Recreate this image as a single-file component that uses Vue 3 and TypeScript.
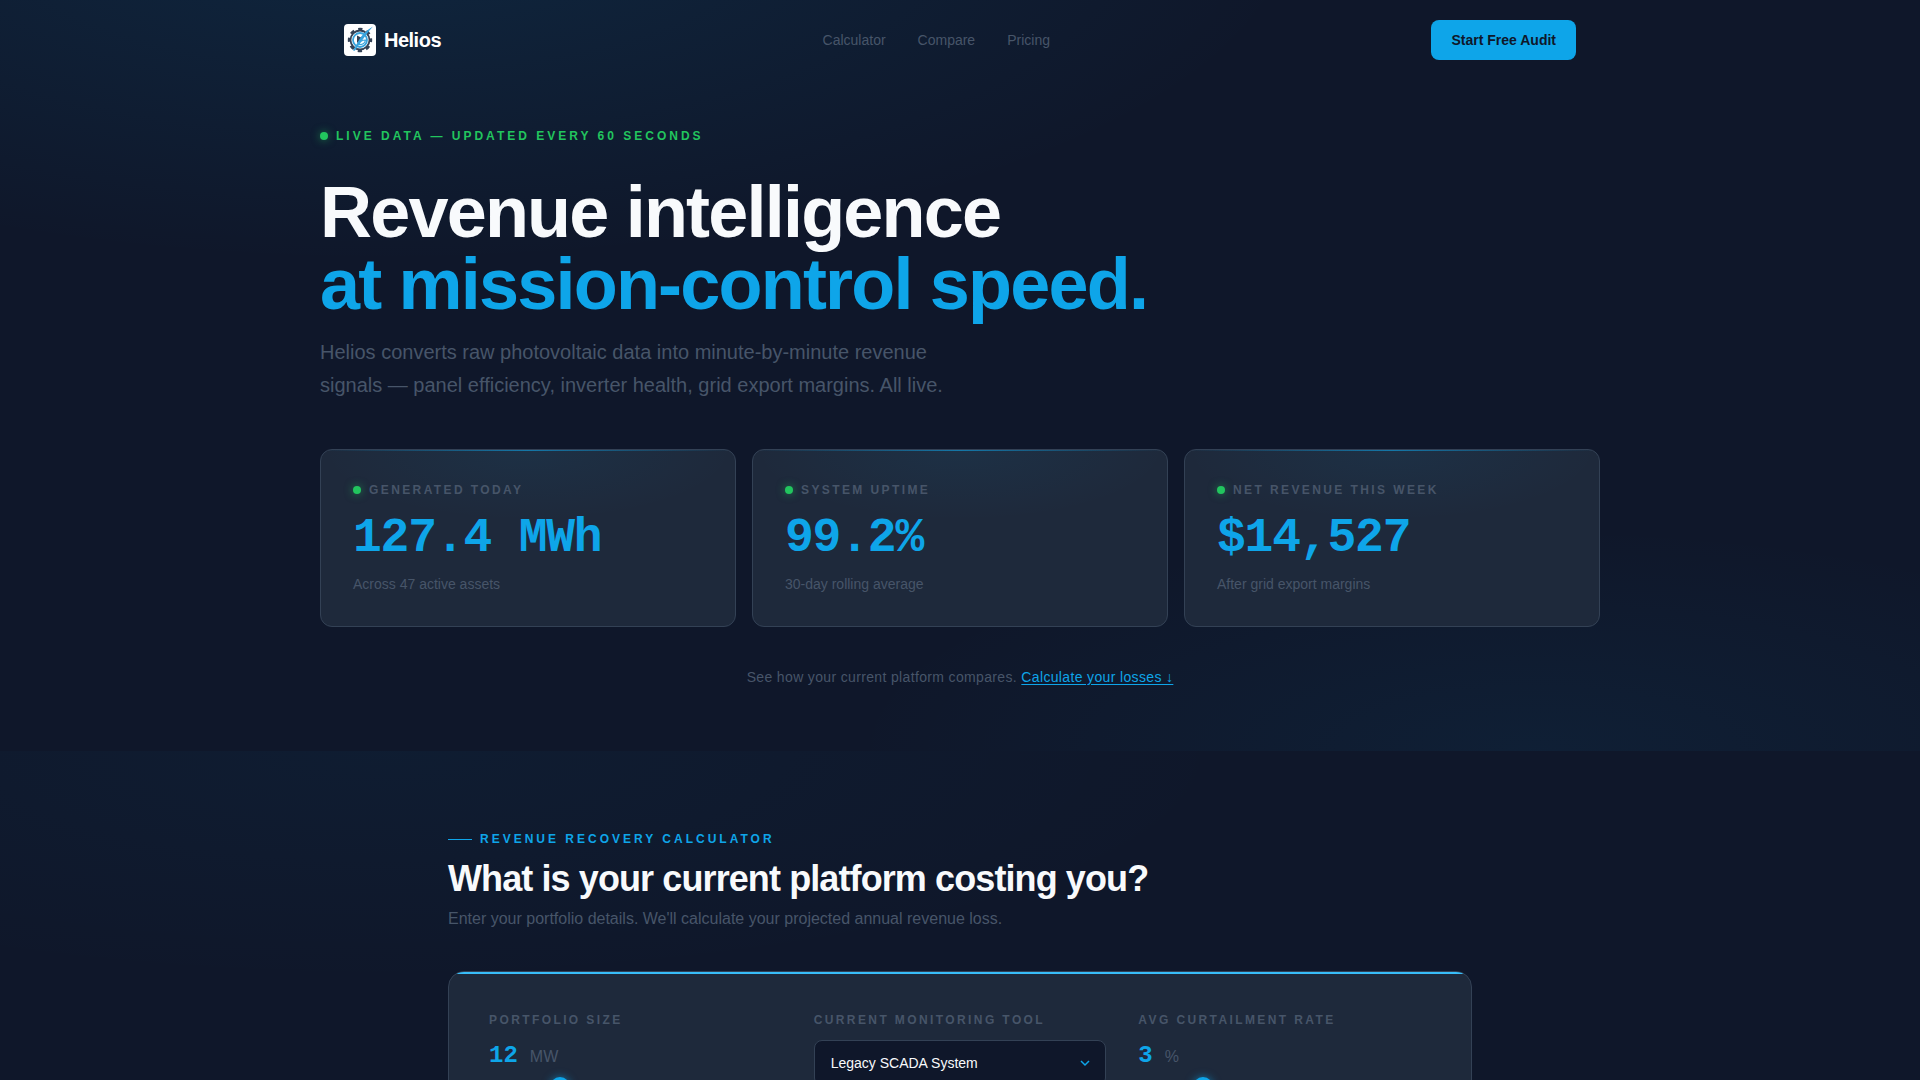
<script setup lang="ts">
import { ref } from 'vue'

interface Metric {
  label: string
  value: string
  note: string
}

const links: string[] = ['Calculator', 'Compare', 'Pricing']

const metrics: Metric[] = [
  { label: 'Generated today', value: '127.4 MWh', note: 'Across 47 active assets' },
  { label: 'System uptime', value: '99.2%', note: '30-day rolling average' },
  { label: 'Net revenue this week', value: '$14,527', note: 'After grid export margins' },
]

const tools: string[] = ['Legacy SCADA System']

const size = ref<number>(12)
const tool = ref<string>(tools[0])
const rate = ref<number>(3)
</script>

<template>
  <div class="page">
    <div class="hero">
      <header class="nav">
        <a class="brand" href="#">
          <svg class="logo" viewBox="0 0 32 32" aria-hidden="true">
            <rect width="32" height="32" rx="4" fill="#fff" />
            <circle cx="16" cy="16" r="9.500" fill="none" stroke="#334155" stroke-width="1.8" />
            <circle cx="16" cy="16" r="10.800" fill="none" stroke="#334155" stroke-width="2.800" stroke-dasharray="4.24 4.24" stroke-dashoffset="2.12" />
            <circle cx="16" cy="16" r="7" fill="#fff" stroke="#38a3dc" stroke-width="1.8" />
            <path d="M13 11.500l6 3-6 4.500z" fill="#334155" />
            <path d="M29 2.500C23 6 18 10.500 15 16L9 26.500l1.800.3 4.200-6C19 15 24 8 29 2.500z" fill="#38a3dc" />
            <path d="M15 20.500c1-3 3.500-4.500 6.500-4.500-.5 3-3 4.800-6.500 4.500z" fill="#fff" stroke="#38a3dc" stroke-width="1.2" />
          </svg>
          <span>Helios</span>
        </a>
        <nav class="links">
          <a v-for="link in links" :key="link" href="#">{{ link }}</a>
        </nav>
        <button class="audit" type="button">Start Free Audit</button>
      </header>

      <main class="intro">
        <p class="live"><span class="dot"></span>Live data — updated every 60 seconds</p>
        <h1>Revenue intelligence<br /><span>at mission-control speed.</span></h1>
        <p class="lead">
          Helios converts raw photovoltaic data into minute-by-minute revenue signals — panel
          efficiency, inverter health, grid export margins. All live.
        </p>
        <div class="metrics">
          <article v-for="m in metrics" :key="m.label" class="metric">
            <h2 class="label"><span class="dot"></span>{{ m.label }}</h2>
            <p class="value">{{ m.value }}</p>
            <p class="note">{{ m.note }}</p>
          </article>
        </div>
        <p class="compare">
          See how your current platform compares. <a href="#calculator">Calculate your losses ↓</a>
        </p>
      </main>
    </div>

    <section id="calculator" class="calculator">
      <div class="inner">
        <p class="eyebrow">Revenue recovery calculator</p>
        <h2 class="title">What is your current platform costing you?</h2>
        <p class="hint">Enter your portfolio details. We'll calculate your projected annual revenue loss.</p>
        <form class="panel">
          <div class="field">
            <label class="label" for="size">Portfolio size</label>
            <p class="reading"><output for="size">{{ size }}</output><span>MW</span></p>
            <input id="size" v-model.number="size" type="range" min="1" max="50" />
          </div>
          <div class="field">
            <label class="label" for="tool">Current monitoring tool</label>
            <div class="picker">
              <select id="tool" v-model="tool">
                <option v-for="t in tools" :key="t">{{ t }}</option>
              </select>
              <svg viewBox="0 0 12 12" aria-hidden="true">
                <path d="M2 4l4 4 4-4" fill="none" stroke="#0ea5e9" stroke-width="1.5" />
              </svg>
            </div>
          </div>
          <div class="field">
            <label class="label" for="rate">Avg curtailment rate</label>
            <p class="reading"><output for="rate">{{ rate }}</output><span>%</span></p>
            <input id="rate" v-model.number="rate" type="range" min="0" max="15" />
          </div>
        </form>
      </div>
    </section>
  </div>
</template>

<style>
body {
  margin: 0;
  background: #0f172a;
}
</style>

<style scoped>
.page {
  height: 100vh;
  overflow-x: hidden;
  overflow-y: auto;
  scrollbar-width: none;
  background: #0f172a;
  color: #475569;
  font-family: "Liberation Sans", Arial, sans-serif;
  font-size: 14px;
  line-height: 20px;
}

h1,
h2,
p {
  margin: 0;
}

a {
  color: inherit;
  text-decoration: none;
}

.hero {
  background:
    radial-gradient(ellipse 36% 30% at 80% 100%, rgba(14, 165, 233, 0.06), transparent 100%),
    radial-gradient(ellipse 48% 45% at 20% -10%, rgba(14, 165, 233, 0.11), transparent 100%);
}

.nav {
  box-sizing: border-box;
  display: flex;
  align-items: center;
  justify-content: space-between;
  max-width: 1280px;
  height: 80px;
  margin: 0 auto;
  padding: 0 24px;
}

.brand {
  display: flex;
  align-items: center;
  gap: 8px;
  color: #fff;
  font-size: 20px;
  font-weight: 700;
  letter-spacing: -0.025em;
}

.logo {
  width: 32px;
  height: 32px;
}

.links {
  display: flex;
  gap: 32px;
}

.audit {
  height: 40px;
  padding: 0 20px;
  border: 0;
  border-radius: 8px;
  background: #0ea5e9;
  color: #0f172a;
  font: 700 14px "Liberation Sans", Arial, sans-serif;
  cursor: pointer;
}

.intro {
  max-width: 1280px;
  margin: 0 auto;
  padding: 48px 0 64px;
}

.dot {
  width: 8px;
  height: 8px;
  border-radius: 50%;
  background: #22c55e;
  box-shadow: 0 0 8px rgba(34, 197, 94, 0.6);
}

.live,
.label,
.eyebrow {
  display: flex;
  align-items: center;
  gap: 8px;
  font-size: 12px;
  font-weight: 700;
  line-height: 16px;
  letter-spacing: 0.2em;
  text-transform: uppercase;
}

.live,
.eyebrow {
  letter-spacing: 0.25em;
}

.live {
  margin-bottom: 32px;
  color: #22c55e;
}

h1 {
  color: #f8fafc;
  font-size: 72px;
  line-height: 72px;
  letter-spacing: -0.025em;
}

h1 span {
  color: #0ea5e9;
}

.lead {
  max-width: 640px;
  margin: 16px 0 47px;
  font-size: 20px;
  line-height: 33px;
}

.metrics {
  display: grid;
  grid-template-columns: repeat(3, 1fr);
  gap: 16px;
}

.metric {
  position: relative;
  overflow: hidden;
  padding: 32px;
  border: 1px solid #334155;
  border-radius: 12px;
  background:
    radial-gradient(ellipse 50% 40% at 50% 0%, rgba(14, 165, 233, 0.06), transparent 100%),
    #1e293b;
}

.metric::before {
  content: "";
  position: absolute;
  top: 0;
  right: 0;
  left: 0;
  height: 1px;
  background: linear-gradient(90deg, transparent, #0ea5e9, transparent);
  opacity: 0.6;
}

.value {
  margin: 16px 0 12px;
  color: #0ea5e9;
  font-family: "Liberation Mono", "Courier New", monospace;
  font-size: 48px;
  font-weight: 700;
  line-height: 48px;
  letter-spacing: -0.025em;
}

.compare {
  margin-top: 40px;
  letter-spacing: 0.025em;
  text-align: center;
}

.compare a {
  color: #0ea5e9;
  text-decoration: underline;
  text-underline-offset: 2px;
}

.calculator {
  background: radial-gradient(ellipse 45% 50% at 20% 0%, rgba(14, 165, 233, 0.04), transparent 100%);
}

.inner {
  max-width: 1024px;
  margin: 0 auto;
  padding: 80px 0;
}

.eyebrow {
  color: #0ea5e9;
}

.eyebrow::before {
  content: "";
  width: 24px;
  height: 1px;
  background: #0ea5e9;
}

.title {
  margin: 12px 0 8px;
  color: #f8fafc;
  font-size: 36px;
  line-height: 40px;
  letter-spacing: -0.025em;
}

.hint {
  font-size: 16px;
  line-height: 24px;
}

.panel {
  position: relative;
  overflow: hidden;
  display: grid;
  grid-template-columns: repeat(3, 1fr);
  gap: 32px;
  margin-top: 40px;
  padding: 40px;
  border: 1px solid #334155;
  border-radius: 16px;
  background: #1e293b;
}

.panel::before {
  content: "";
  position: absolute;
  top: 0;
  right: 0;
  left: 0;
  height: 2px;
  background: #38bdf8;
}

.reading {
  display: flex;
  align-items: baseline;
  gap: 12px;
  margin: 12px 0 4px;
  font-size: 16px;
  line-height: 32px;
}

output {
  color: #0ea5e9;
  font-family: "Liberation Mono", "Courier New", monospace;
  font-size: 24px;
  font-weight: 700;
}

input[type="range"] {
  display: block;
  width: 100%;
  height: 20px;
  margin: 0;
  appearance: none;
  background: linear-gradient(#334155, #334155) center / 100% 4px no-repeat;
}

input[type="range"]::-webkit-slider-thumb {
  width: 20px;
  height: 20px;
  appearance: none;
  border-radius: 50%;
  background: #0ea5e9;
  box-shadow: 0 0 8px rgba(14, 165, 233, 0.6);
}

.picker {
  position: relative;
  margin-top: 12px;
}

.picker select {
  width: 100%;
  height: 46px;
  padding: 0 40px 0 16px;
  border: 1px solid #334155;
  border-radius: 8px;
  appearance: none;
  background: #0f172a;
  color: #f8fafc;
  font: 14px "Liberation Sans", Arial, sans-serif;
}

.picker svg {
  position: absolute;
  top: 17px;
  right: 15px;
  width: 12px;
  height: 12px;
  pointer-events: none;
}
</style>
